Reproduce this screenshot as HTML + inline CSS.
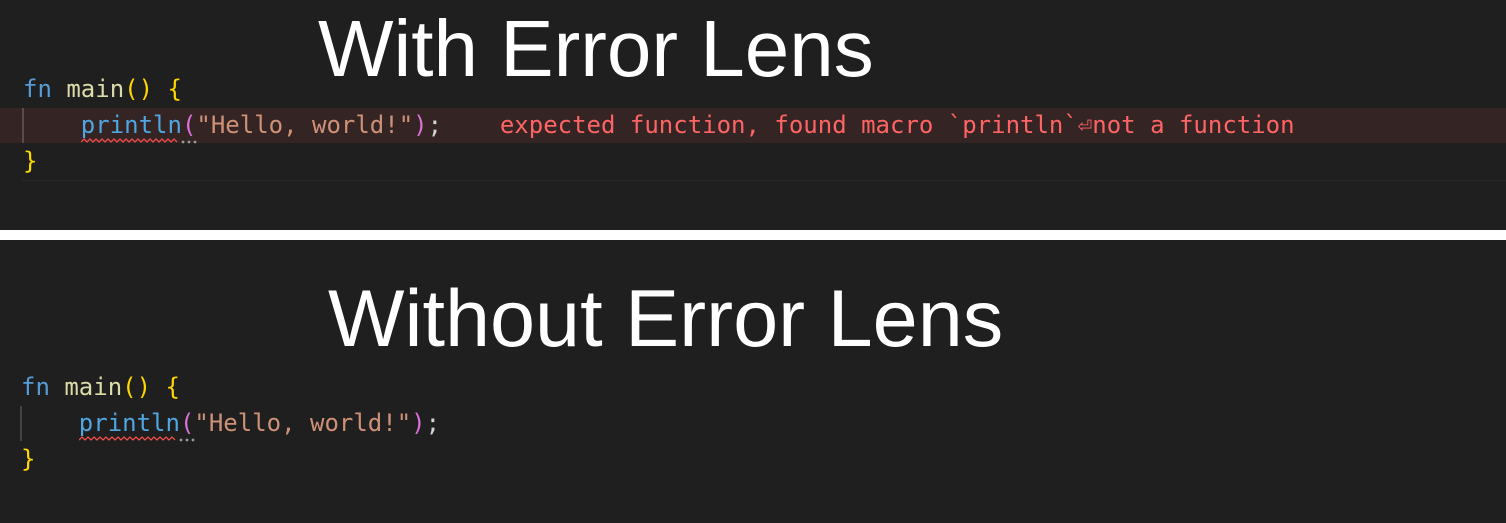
<!DOCTYPE html>
<html><head><style>
body{margin:0;width:1506px;height:523px;background:#1f1f1f;overflow:hidden;position:relative;font-family:"DejaVu Sans Mono","Liberation Mono",monospace;}
.t{position:absolute;font-family:"Liberation Sans",sans-serif;color:#fff;font-size:80px;line-height:1;white-space:nowrap}
.l{position:absolute;font-size:24px;line-height:36px;white-space:pre;color:#d4d4d4}
.k{color:#569cd6}.f{color:#dcdcaa}.y{color:#ffd700}.b{color:#4fa6e0}.p{color:#da70d6}.s{color:#ce9178}.e{color:#ff6464}
svg{position:absolute}
</style></head><body>
<div class="t" style="left:318px;top:9px">With Error Lens</div>
<div class="t" style="left:328px;top:279px;font-size:81px">Without Error Lens</div>

<div style="position:absolute;left:0;top:108px;width:1506px;height:35px;background:#352424"></div>
<div style="position:absolute;left:22px;top:108px;width:2px;height:35px;background:#5a4a4a"></div>
<div style="position:absolute;left:22px;top:180px;width:1484px;height:1px;background:#2a2a2a"></div>
<div style="position:absolute;left:0;top:230px;width:1506px;height:10px;background:#fff"></div>
<div style="position:absolute;left:20px;top:406px;width:2px;height:35px;background:#444"></div>

<div class="l" style="left:23px;top:71px"><span class="k">fn</span> <span class="f">main</span><span class="y">()</span> <span class="y">{</span></div>
<div class="l" style="left:23px;top:107px">    <span class="b">println</span><span class="p">(</span><span class="s">"Hello, world!"</span><span class="p">)</span>;    <span class="e">expected function, found macro `println`⏎not a function</span></div>
<div class="l" style="left:23px;top:143px"><span class="y">}</span></div>
<svg style="left:81px;top:137px" width="120" height="8"><path d="M0 5 l3 -3 l3 3 l3 -3 l3 3 l3 -3 l3 3 l3 -3 l3 3 l3 -3 l3 3 l3 -3 l3 3 l3 -3 l3 3 l3 -3 l3 3 l3 -3 l3 3 l3 -3 l3 3 l3 -3 l3 3 l3 -3 l3 3 l3 -3 l3 3 l3 -3 l3 3 l3 -3 l3 3 l3 -3 l3 3" fill="none" stroke="#f14c4c" stroke-width="1.3"/><circle cx="102" cy="5" r="1.4" fill="#999"/><circle cx="108" cy="5" r="1.4" fill="#999"/><circle cx="114" cy="5" r="1.4" fill="#999"/></svg>

<div class="l" style="left:21px;top:369px"><span class="k">fn</span> <span class="f">main</span><span class="y">()</span> <span class="y">{</span></div>
<div class="l" style="left:21px;top:405px">    <span class="b">println</span><span class="p">(</span><span class="s">"Hello, world!"</span><span class="p">)</span>;</div>
<div class="l" style="left:21px;top:441px"><span class="y">}</span></div>
<svg style="left:79px;top:435px" width="120" height="8"><path d="M0 5 l3 -3 l3 3 l3 -3 l3 3 l3 -3 l3 3 l3 -3 l3 3 l3 -3 l3 3 l3 -3 l3 3 l3 -3 l3 3 l3 -3 l3 3 l3 -3 l3 3 l3 -3 l3 3 l3 -3 l3 3 l3 -3 l3 3 l3 -3 l3 3 l3 -3 l3 3 l3 -3 l3 3 l3 -3 l3 3" fill="none" stroke="#f14c4c" stroke-width="1.3"/><circle cx="102" cy="5" r="1.4" fill="#999"/><circle cx="108" cy="5" r="1.4" fill="#999"/><circle cx="114" cy="5" r="1.4" fill="#999"/></svg>
</body></html>
